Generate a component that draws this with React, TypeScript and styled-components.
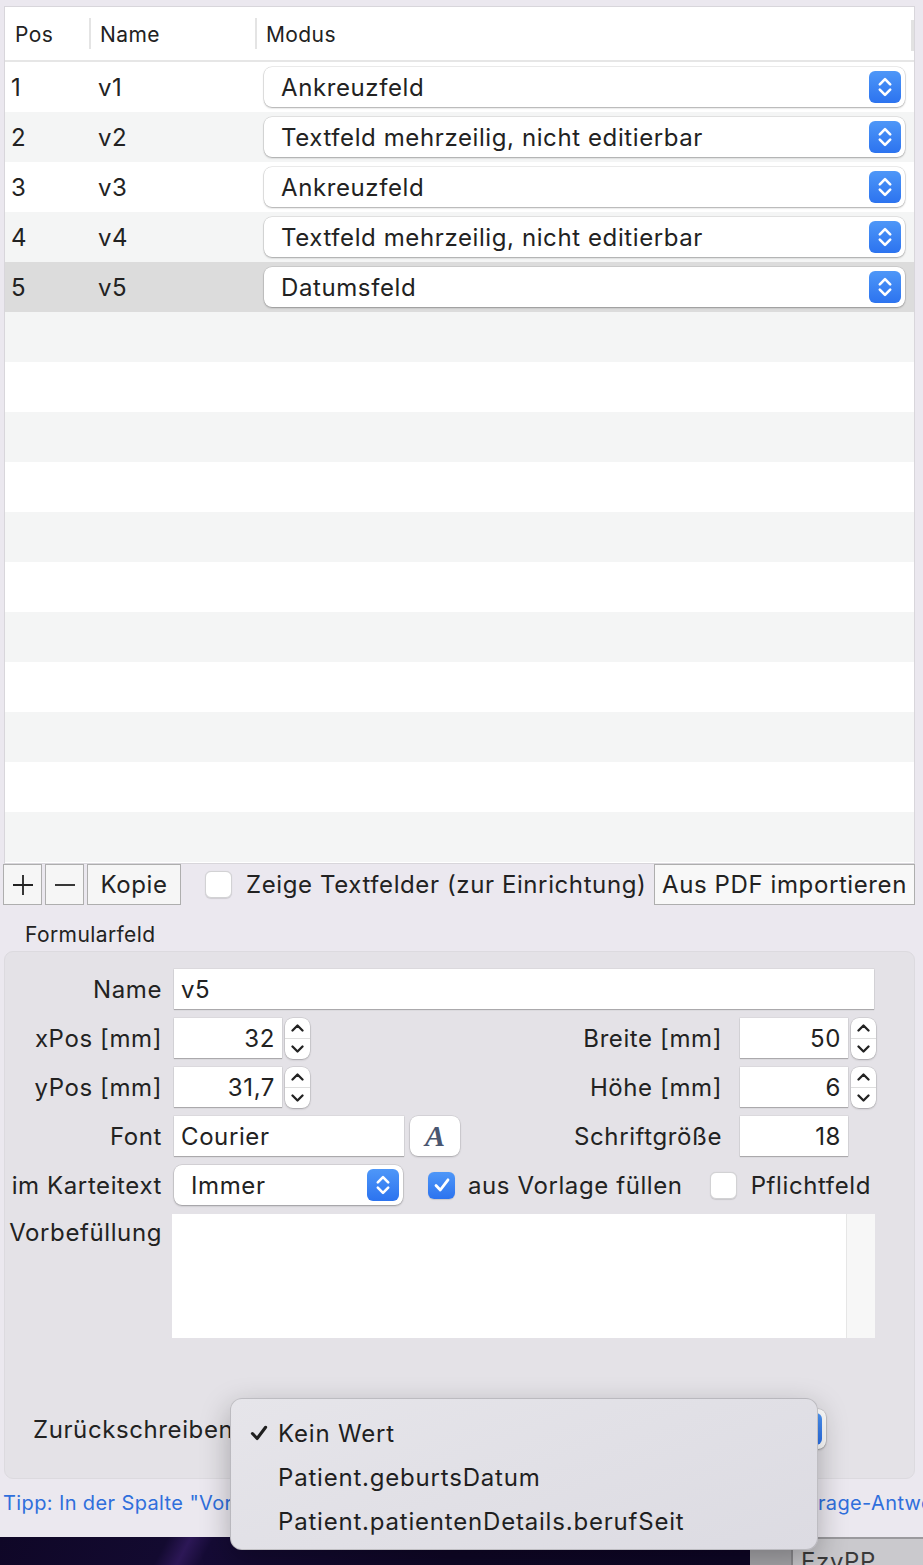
import React from "react";
import styled, { createGlobalStyle, css } from "styled-components";

interface Field {
    pos: number,
    name: string,
    mode: string,
}

const fields: Field[] = [
    { pos: 1, name: "v1", mode: "Ankreuzfeld" },
    { pos: 2, name: "v2", mode: "Textfeld mehrzeilig, nicht editierbar" },
    { pos: 3, name: "v3", mode: "Ankreuzfeld" },
    { pos: 4, name: "v4", mode: "Textfeld mehrzeilig, nicht editierbar" },
    { pos: 5, name: "v5", mode: "Datumsfeld" },
];

const GlobalStyle = createGlobalStyle`
    html, body {
        margin: 0;
        padding: 0;
    }
    body {
        background: #ebe8ef;
        font-family: Inter, "Noto Sans", "Liberation Sans", sans-serif;
        color: #262626;
        -webkit-font-smoothing: antialiased;
    }
`;

// macOS system text is a little wider than Inter, so track it out a bit
const bodyText = css`
    font-size: 24px;
    letter-spacing: 0.6px;
    color: #222;
`;

const Page = styled.div`
    position: relative;
    width: 923px;
    height: 1565px;
    overflow: hidden;
    display: flex;
    flex-direction: column;
`;

const Window = styled.div`
    height: 1537px;
    flex: none;
    box-sizing: border-box;
    padding-top: 6px;
    display: flex;
    flex-direction: column;
    background: #ebe8ef;
`;

const Table = styled.div`
    margin: 0 8px 0 4px;
    height: 858px;
    flex: none;
    box-sizing: border-box;
    border: 1px solid #d8d6db;
    background: #fff;
    display: flex;
    flex-direction: column;
    overflow: hidden;
`;

const HeaderRow = styled.div`
    position: relative;
    height: 53px;
    flex: none;
    display: flex;
    align-items: center;
    border-bottom: 2px solid #e6e6e6;
    font-size: 21px;
    letter-spacing: 0.4px;
    color: #222;
`;

const HeaderCell = styled.div<{ $w?: number, $pad: number }>`
    width: ${p => p.$w ? `${p.$w}px` : "auto"};
    flex: ${p => p.$w ? "none" : 1};
    padding-left: ${p => p.$pad}px;
    box-sizing: border-box;
    padding-top: 2px;
`;

const HeaderSep = styled.div`
    width: 2px;
    height: 31px;
    background: #e4e4e4;
    flex: none;
`;

const ScrollHint = styled.div`
    position: absolute;
    right: 0;
    top: 13px;
    width: 3px;
    height: 31px;
    background: #e2e2e2;
`;

const Row = styled.div<{ $bg: string }>`
    height: 50px;
    flex: none;
    display: grid;
    grid-template-columns: 84px 166px 1fr;
    align-items: center;
    background: ${p => p.$bg};
    ${bodyText};
`;

const PosCell = styled.div`
    padding-left: 6px;
`;

const NameCell = styled.div`
    padding-left: 9px;
`;

const ModeCell = styled.div`
    padding: 0 9px;
`;

const Popup = styled.div<{ $w?: number, $ml?: number }>`
    height: 40px;
    width: ${p => p.$w ? `${p.$w}px` : "auto"};
    flex: ${p => p.$w ? "none" : 1};
    margin-left: ${p => p.$ml ?? 0}px;
    box-sizing: border-box;
    background: #fff;
    border-radius: 8px;
    box-shadow: 0 0 0 0.5px rgba(0, 0, 0, 0.14), 0 1px 2px rgba(0, 0, 0, 0.28);
    display: flex;
    align-items: center;
    justify-content: space-between;
    padding: 0 4px 0 17px;
    ${bodyText};
`;

const BlueButton = styled.div`
    width: 32px;
    height: 32px;
    border-radius: 6px;
    background: linear-gradient(#4e97f8, #2c73ef);
    display: grid;
    place-items: center;
    flex: none;
`;

const Filler = styled.div<{ $bg: string }>`
    height: 50px;
    flex: none;
    background: ${p => p.$bg};
`;

const Toolbar = styled.div`
    height: 41px;
    flex: none;
    display: flex;
    align-items: center;
    padding-left: 3px;
    padding-right: 8px;
    ${bodyText};
`;

const ToolButton = styled.div<{ $w: number }>`
    width: ${p => p.$w}px;
    height: 41px;
    box-sizing: border-box;
    border: 1px solid #aeaeae;
    background: #f6f6f6;
    display: flex;
    align-items: center;
    justify-content: center;
    margin-right: 3px;
    white-space: nowrap;
`;

const ImportButton = styled(ToolButton)`
    margin-left: auto;
    margin-right: 0;
    background: #f8f8f8;
`;

const Check = styled.div<{ $on?: boolean }>`
    width: 27px;
    height: 27px;
    box-sizing: border-box;
    border-radius: 6px;
    flex: none;
    background: ${p => p.$on ? "linear-gradient(#4e97f8, #2c73ef)" : "#fff"};
    border: ${p => p.$on ? "none" : "1px solid #d2d2d4"};
    box-shadow: 0 0.5px 1px rgba(0, 0, 0, 0.12);
    display: grid;
    place-items: center;
`;

const CheckLabel = styled.span<{ $ml: number }>`
    margin-left: ${p => p.$ml}px;
    white-space: nowrap;
`;

const CheckWrap = styled.div<{ $ml: number }>`
    display: flex;
    align-items: center;
    margin-left: ${p => p.$ml}px;
`;

const SectionTitle = styled.div`
    height: 46px;
    flex: none;
    box-sizing: border-box;
    padding: 0 0 4px 25px;
    display: flex;
    align-items: flex-end;
    font-size: 21px;
    letter-spacing: 0.4px;
    color: #222;
`;

const GroupBox = styled.div`
    margin: 0 8px 0 4px;
    height: 528px;
    flex: none;
    box-sizing: border-box;
    border: 1px solid #dcdadf;
    border-radius: 9px;
    background: #e4e2e7;
    padding-top: 17px;
    display: flex;
    flex-direction: column;
    gap: 9px;
`;

const FormRow = styled.div<{ $h?: number, $mt?: number, $top?: boolean, $pr?: number }>`
    height: ${p => p.$h ?? 40}px;
    margin-top: ${p => p.$mt ?? 0}px;
    display: flex;
    align-items: ${p => p.$top ? "flex-start" : "center"};
    padding-right: ${p => p.$pr ?? 38}px;
    ${bodyText};
`;

const Label = styled.div<{ $w?: number, $pt?: number }>`
    width: ${p => p.$w ?? 157}px;
    flex: none;
    text-align: right;
    white-space: nowrap;
    padding-top: ${p => p.$pt ?? 0}px;
`;

const LeadLabel = styled.div`
    flex: none;
    padding-left: 28px;
    white-space: nowrap;
`;

const RightLabel = styled.div`
    flex: 1;
    text-align: right;
    margin-right: 18px;
    white-space: nowrap;
`;

const TextField = styled.div<{ $w?: number, $ml?: number }>`
    height: 40px;
    width: ${p => p.$w ? `${p.$w}px` : "auto"};
    flex: ${p => p.$w ? "none" : 1};
    margin-left: ${p => p.$ml ?? 12}px;
    box-sizing: border-box;
    background: #fff;
    box-shadow: 0 0 0 0.5px rgba(0, 0, 0, 0.08), 0 1px 1px rgba(0, 0, 0, 0.22);
    display: flex;
    align-items: center;
    padding: 0 7px;
`;

const NumberField = styled(TextField)`
    justify-content: flex-end;
`;

const StepperSlot = styled.div`
    width: 28px;
    flex: none;
    display: flex;
    justify-content: flex-end;
`;

const Stepper = styled.div`
    width: 25px;
    height: 41px;
    box-sizing: border-box;
    border-radius: 8px;
    background: #fff;
    box-shadow: 0 0 0 0.5px rgba(0, 0, 0, 0.14), 0 1px 2px rgba(0, 0, 0, 0.22);
    display: flex;
    flex-direction: column;
`;

const StepHalf = styled.div<{ $divider?: boolean }>`
    flex: 1;
    display: grid;
    place-items: center;
    border-bottom: ${p => p.$divider ? "1px solid #dedede" : "none"};
`;

const FontButton = styled.div`
    width: 50px;
    height: 40px;
    margin-left: 6px;
    border-radius: 8px;
    background: #fff;
    box-shadow: 0 0 0 0.5px rgba(0, 0, 0, 0.12), 0 1px 2px rgba(0, 0, 0, 0.22);
    display: grid;
    place-items: center;
    font-family: "Liberation Serif", "DejaVu Serif", serif;
    font-style: italic;
    font-weight: bold;
    font-size: 30px;
    letter-spacing: 0;
    color: #4a5670;
    flex: none;
`;

const TextArea = styled.div`
    width: 703px;
    height: 124px;
    margin-left: 10px;
    flex: none;
    display: flex;
    background: #fff;
`;

const TextAreaTrack = styled.div`
    width: 28px;
    margin-left: auto;
    background: #f7f7f7;
    border-left: 1px solid #e6e6e6;
`;

const TipLine = styled.div`
    flex: 1;
    padding: 12px 0 0 3px;
    font-size: 20px;
    letter-spacing: 0.38px;
    color: #2f6fdc;
    white-space: nowrap;
    overflow: hidden;
`;

const Desktop = styled.div`
    height: 28px;
    flex: none;
    display: flex;
`;

const Wallpaper = styled.div`
    width: 750px;
    flex: none;
    background: linear-gradient(118deg, #0f0727 0%, #130a30 22%, #2c1756 25%, #150b35 28%, #0f0727 60%, #0e0626 100%);
`;

const DockGap = styled.div`
    width: 41px;
    flex: none;
    background: #a9a8ac;
    border-right: 2px solid #8d8c90;
`;

const OtherWindow = styled.div`
    flex: 1;
    background: #cac9cd;
    box-shadow: inset 0 2px 0 #9a999d;
    padding: 13px 0 0 8px;
    font-size: 24px;
    letter-spacing: 0.6px;
    color: #3a3a3a;
    overflow: hidden;
    line-height: 1;
`;

const Menu = styled.div`
    position: absolute;
    left: 230px;
    top: 1398px;
    width: 588px;
    height: 152px;
    box-sizing: border-box;
    padding-top: 12px;
    border-radius: 12px;
    background: linear-gradient(160deg, #e6e5ea, #dcdbe2);
    border: 1px solid rgba(0, 0, 0, 0.16);
    box-shadow: 0 10px 30px rgba(0, 0, 0, 0.28);
    display: flex;
    flex-direction: column;
`;

const MenuItem = styled.div`
    height: 44px;
    display: flex;
    align-items: center;
    ${bodyText};
    letter-spacing: 0.8px;
    color: #1f1f1f;
`;

const MenuMark = styled.div`
    width: 47px;
    padding-left: 17px;
    box-sizing: border-box;
    display: flex;
    align-items: center;
    flex: none;
`;

function BlueChevrons() {
    return (
        <svg width="32" height="32" viewBox="0 0 32 32">
            <path d="M10.8 13.4 L16 8.2 L21.2 13.4 M10.8 18.6 L16 23.8 L21.2 18.6" fill="none" stroke="#fff" strokeWidth="2.6" strokeLinecap="round" strokeLinejoin="round" />
        </svg>
    );
}

function UpDown() {
    return (
        <Stepper>
            <StepHalf $divider>
                <svg width="13" height="8" viewBox="0 0 13 8">
                    <path d="M1.5 6.5 L6.5 1.5 L11.5 6.5" fill="none" stroke="#222" strokeWidth="2.3" strokeLinecap="round" strokeLinejoin="round" />
                </svg>
            </StepHalf>
            <StepHalf>
                <svg width="13" height="8" viewBox="0 0 13 8">
                    <path d="M1.5 1.5 L6.5 6.5 L11.5 1.5" fill="none" stroke="#222" strokeWidth="2.3" strokeLinecap="round" strokeLinejoin="round" />
                </svg>
            </StepHalf>
        </Stepper>
    );
}

function Tick({ color, size }: { color: string, size: number }) {
    return (
        <svg width={size} height={size} viewBox="0 0 20 20">
            <path d="M4 10.5 L8.3 15 L16 4.8" fill="none" stroke={color} strokeWidth="2.8" strokeLinecap="round" strokeLinejoin="round" />
        </svg>
    );
}

function rowColor(i: number, selected: boolean) {
    if (selected) return "#dcdcdc";
    return i % 2 === 0 ? "#ffffff" : "#f4f5f5";
}

export default function App() {
    const empty = Array.from({ length: 11 }, (_, i) => i + fields.length);

    return (
        <Page>
            <GlobalStyle />
            <Window>
                <Table>
                    <HeaderRow>
                        <HeaderCell $w={84} $pad={10}>Pos</HeaderCell>
                        <HeaderSep />
                        <HeaderCell $w={164} $pad={9}>Name</HeaderCell>
                        <HeaderSep />
                        <HeaderCell $pad={9}>Modus</HeaderCell>
                        <ScrollHint />
                    </HeaderRow>
                    {fields.map((f, i) => (
                        <Row key={f.pos} $bg={rowColor(i, f.pos === 5)}>
                            <PosCell>{f.pos}</PosCell>
                            <NameCell>{f.name}</NameCell>
                            <ModeCell>
                                <Popup>
                                    {f.mode}
                                    <BlueButton><BlueChevrons /></BlueButton>
                                </Popup>
                            </ModeCell>
                        </Row>
                    ))}
                    {empty.map(i => <Filler key={i} $bg={rowColor(i, false)} />)}
                </Table>

                <Toolbar>
                    <ToolButton $w={39}>
                        <svg width="22" height="22" viewBox="0 0 22 22">
                            <path d="M11 1 V21 M1 11 H21" stroke="#222" strokeWidth="1.8" />
                        </svg>
                    </ToolButton>
                    <ToolButton $w={39}>
                        <svg width="22" height="22" viewBox="0 0 22 22">
                            <path d="M1 11 H21" stroke="#222" strokeWidth="1.8" />
                        </svg>
                    </ToolButton>
                    <ToolButton $w={94}>Kopie</ToolButton>
                    <CheckWrap $ml={21}>
                        <Check />
                        <CheckLabel $ml={14}>Zeige Textfelder (zur Einrichtung)</CheckLabel>
                    </CheckWrap>
                    <ImportButton $w={261}>Aus PDF importieren</ImportButton>
                </Toolbar>

                <SectionTitle>Formularfeld</SectionTitle>

                <GroupBox>
                    <FormRow $pr={40}>
                        <Label>Name</Label>
                        <TextField>v5</TextField>
                    </FormRow>
                    <FormRow>
                        <Label>xPos [mm]</Label>
                        <NumberField $w={108}>32</NumberField>
                        <StepperSlot><UpDown /></StepperSlot>
                        <RightLabel>Breite [mm]</RightLabel>
                        <NumberField $w={108} $ml={0}>50</NumberField>
                        <StepperSlot><UpDown /></StepperSlot>
                    </FormRow>
                    <FormRow>
                        <Label>yPos [mm]</Label>
                        <NumberField $w={108}>31,7</NumberField>
                        <StepperSlot><UpDown /></StepperSlot>
                        <RightLabel>Höhe [mm]</RightLabel>
                        <NumberField $w={108} $ml={0}>6</NumberField>
                        <StepperSlot><UpDown /></StepperSlot>
                    </FormRow>
                    <FormRow>
                        <Label>Font</Label>
                        <TextField $w={230}>Courier</TextField>
                        <FontButton>A</FontButton>
                        <RightLabel>Schriftgröße</RightLabel>
                        <NumberField $w={108} $ml={0}>18</NumberField>
                        <StepperSlot />
                    </FormRow>
                    <FormRow>
                        <Label>im Karteitext</Label>
                        <Popup $w={229} $ml={12}>
                            Immer
                            <BlueButton><BlueChevrons /></BlueButton>
                        </Popup>
                        <CheckWrap $ml={25}>
                            <Check $on><Tick color="#fff" size={20} /></Check>
                            <CheckLabel $ml={13}>aus Vorlage füllen</CheckLabel>
                        </CheckWrap>
                        <CheckWrap $ml={27}>
                            <Check />
                            <CheckLabel $ml={14}>Pflichtfeld</CheckLabel>
                        </CheckWrap>
                    </FormRow>
                    <FormRow $h={124} $top>
                        <Label $pt={4}>Vorbefüllung</Label>
                        <TextArea>
                            <TextAreaTrack />
                        </TextArea>
                    </FormRow>
                    <FormRow $mt={62} $pr={88}>
                        <LeadLabel>Zurückschreiben</LeadLabel>
                        <Popup $ml={10}>
                            Kein Wert
                            <BlueButton><BlueChevrons /></BlueButton>
                        </Popup>
                    </FormRow>
                </GroupBox>

                <TipLine>
                    Tipp: In der Spalte "Vorbefüllung" können Platzhalter eingesetzt werden, z.B. aus Frage-Antworten
                </TipLine>
            </Window>

            <Desktop>
                <Wallpaper />
                <DockGap />
                <OtherWindow>EzyPP</OtherWindow>
            </Desktop>

            <Menu>
                <MenuItem>
                    <MenuMark><Tick color="#1f1f1f" size={22} /></MenuMark>
                    Kein Wert
                </MenuItem>
                <MenuItem>
                    <MenuMark />
                    Patient.geburtsDatum
                </MenuItem>
                <MenuItem>
                    <MenuMark />
                    Patient.patientenDetails.berufSeit
                </MenuItem>
            </Menu>
        </Page>
    );
}
